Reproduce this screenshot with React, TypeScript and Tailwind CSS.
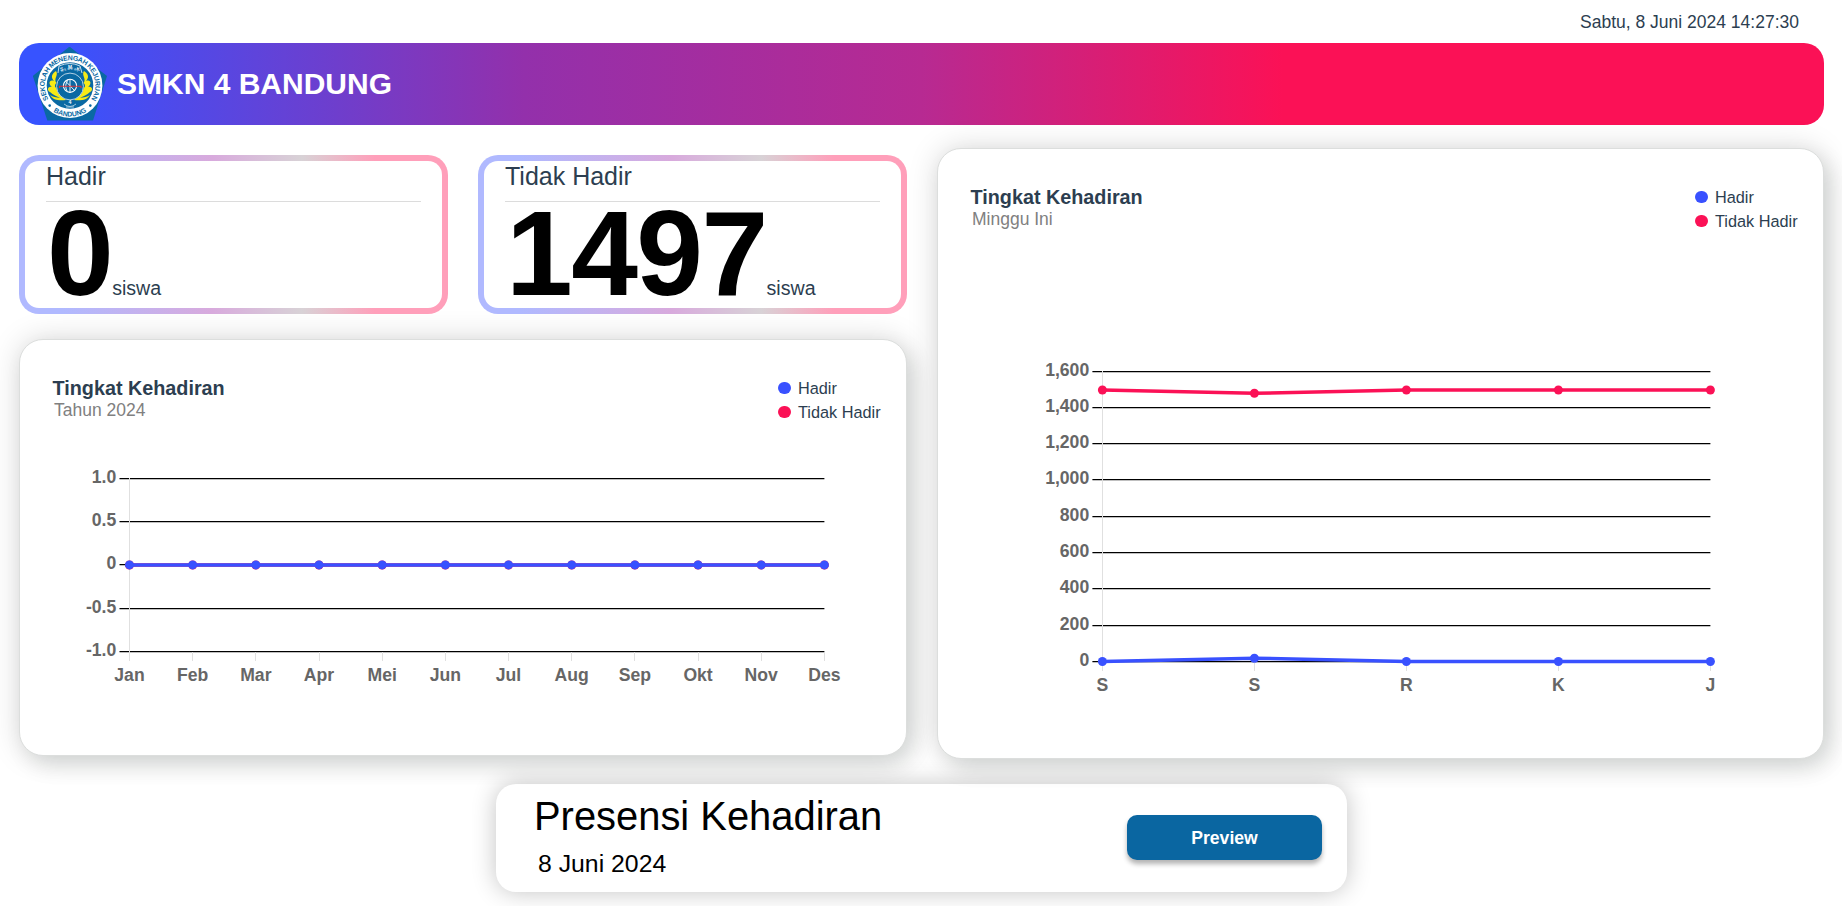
import React from "react";

const MONTHS = ["Jan", "Feb", "Mar", "Apr", "Mei", "Jun", "Jul", "Aug", "Sep", "Okt", "Nov", "Des"];
const DAYS = ["S", "S", "R", "K", "J"];

const BLUE = "#3951ff";
const RED = "#fb1156";

type Series = { color: string; ys: number[] };

type ChartProps = {
  className: string;
  viewBox: string;
  xStart: number;
  xEnd: number;
  labels: string[];
  rows: { label: string; y: number }[];
  series: Series[];
};

function LineChart({ className, viewBox, xStart, xEnd, labels, rows, series }: ChartProps) {
  const step = (xEnd - xStart) / (labels.length - 1);
  const xs = labels.map((_, i) => xStart + i * step);
  const bottom = rows[rows.length - 1].y;
  return (
    <svg className={className} viewBox={viewBox} fontFamily='"Liberation Sans", Arial, sans-serif' fontWeight="700" fontSize="17.6" fill="#666">
      {rows.map((r) => (
        <g key={r.label}>
          <rect x={xStart - 10} y={r.y} width={xEnd - xStart + 10} height="1.25" fill="#000" />
          <text x={xStart - 13.2} y={r.y + 5} textAnchor="end">{r.label}</text>
        </g>
      ))}
      <rect x={Math.floor(xStart)} y={rows[0].y} width="1" height={bottom - rows[0].y + 10} fill="#e0e0e0" />
      {xs.map((x, i) => (
        <g key={i}>
          <rect x={Math.floor(x)} y={bottom + 1} width="1" height="9" fill="#e0e0e0" />
          <text x={x} y={bottom + 30} textAnchor="middle">{labels[i]}</text>
        </g>
      ))}
      {series.map((s) => (
        <g key={s.color}>
          <polyline points={xs.map((x, i) => `${x},${s.ys[i]}`).join(" ")} fill="none" stroke={s.color} strokeWidth="3.5" />
          {xs.map((x, i) => (
            <circle key={i} cx={x} cy={s.ys[i]} r="4.5" fill={s.color} />
          ))}
        </g>
      ))}
    </svg>
  );
}

function Logo() {
  return (
    <svg className="h-[74px] w-[74px] shrink-0" viewBox="33 48 74 74" fontFamily='"Liberation Sans", Arial, sans-serif' fontWeight="700">
      <defs>
        <path id="ringTop" d="M 49.3 101 A 25.3 25.3 0 1 1 90.7 101" />
        <path id="ringBottom" d="M 41.6 99 A 31 31 0 0 0 98.4 99" />
        <path id="innerTop" d="M 55 81 A 16.2 16.2 0 0 1 85 81" />
      </defs>
      <path d="M69.5 47.6 L107 77 L93 121.6 H47.3 L32.8 77 Z" fill="#0a69a3" />
      <circle cx="70" cy="86.5" r="32.4" fill="#fff" />
      <circle cx="70" cy="86.5" r="23.3" fill="#0a69a3" />
      <text fontSize="6.9" fill="#0a69a3" textAnchor="middle" letterSpacing="-0.35">
        <textPath href="#ringTop" startOffset="50%">SEKOLAH MENENGAH KEJURUAN</textPath>
      </text>
      <text fontSize="6.9" fill="#0a69a3" textAnchor="middle">
        <textPath href="#ringBottom" startOffset="50%">BANDUNG</textPath>
      </text>
      <circle cx="49.7" cy="106.6" r="1.3" fill="#0a69a3" />
      <circle cx="90.3" cy="106.6" r="1.3" fill="#0a69a3" />
      <path d="M59 67 L58 74 M59 67 Q70 62 80 67 L82 74" fill="none" stroke="#d8e8f2" strokeWidth="0.9" />
      <g fill="#fff" fontSize="4.8" textAnchor="middle">
        <text x="62" y="71.6" transform="rotate(-12 62 71.6)">S</text>
        <text x="70" y="70">M</text>
        <text x="78" y="71.6" transform="rotate(12 78 71.6)">K</text>
      </g>
      <text fontSize="3.2" fill="#b9d8ea" textAnchor="middle" letterSpacing="0.9">
        <textPath href="#innerTop" startOffset="50%">NEGERI</textPath>
      </text>
      <path d="M56 72 C51 75 51 79 54 82 C49 80 48 85 52 88 C47 87 47 92 50 93 C53 96 57 97 60 99 C56 98 53 98 50 96 C53 101 59 102 66 101 C61 97 57 94 56.5 89 C54 88 55 85 56.5 84 C53 80 59 76 56 72 Z" fill="#f7ea16" />
      <path d="M84 72 C89 75 89 79 86 82 C91 80 92 85 88 88 C93 87 93 92 90 93 C87 96 83 97 80 99 C84 98 87 98 90 96 C87 101 81 102 74 101 C79 97 83 94 83.5 89 C86 88 85 85 83.5 84 C87 80 81 76 84 72 Z" fill="#f7ea16" />
      <circle cx="70" cy="87.5" r="13.4" fill="#0a69a3" stroke="#c5ddeb" strokeWidth="0.9" />
      <circle cx="70" cy="86.8" r="6.6" fill="none" stroke="#fff" strokeWidth="1.1" />
      <path d="M70 80 V93.5 M65.5 82 L74.5 91.5 M67 92 Q64 86 68 81" fill="none" stroke="#fff" strokeWidth="0.9" />
      <path d="M59.5 89 V87.2 H81 V89" fill="none" stroke="#d8343c" strokeWidth="1.1" />
      <text x="70" y="105" fontSize="5.2" fill="#fff" textAnchor="middle">4</text>
      <path d="M64 105 Q70 110 76 105 M66 108 H74" fill="none" stroke="#c5ddeb" strokeWidth="0.8" />
    </svg>
  );
}

function StatCard({ title, value }: { title: string; value: string }) {
  return (
    <div className="h-[159px] w-[429px] rounded-[20px] bg-[linear-gradient(90deg,#b0b9ff_0%,#b0b9ff_10%,#d8aadd_45%,#d8d2d6_66%,#ff9fba_83%)] p-[6px]">
      <div className="flex h-full flex-col rounded-[14px] bg-white px-[21px] pt-[3px]">
        <div className="h-[38px] shrink-0 border-b border-[#dcdcdc] text-[25px] leading-[24px] text-[#2c3e50]">{title}</div>
        <div className="flex items-baseline leading-[103px]">
          <span className="pl-[1px] text-[120px] font-bold tracking-[-1.6px] text-black">{value}</span>
          <span className="text-[19.6px] text-[#2c3e50]">siswa</span>
        </div>
      </div>
    </div>
  );
}

function ChartHeading({ subtitle }: { subtitle: string }) {
  return (
    <div className="flex h-[101px] justify-between pt-[38px] pl-[32.5px]">
      <div className="leading-none">
        <h2 className="text-[19.8px] leading-[20px] font-bold text-[#2c3e50]">Tingkat Kehadiran</h2>
        <p className="mt-[3px] pl-[1.5px] text-[17.5px] leading-[18px] text-[#808080]">{subtitle}</p>
      </div>
      <ul className="w-[128px] text-[16.3px] leading-[24px] text-[#2c3e50]">
        <li className="-mt-[2px] flex items-center gap-[7.5px]">
          <span className="h-[12.5px] w-[12.5px] rounded-full bg-[#3951ff]" />
          Hadir
        </li>
        <li className="flex items-center gap-[7.5px]">
          <span className="h-[12.5px] w-[12.5px] rounded-full bg-[#fb1156]" />
          Tidak Hadir
        </li>
      </ul>
    </div>
  );
}

const YEAR_ROWS = [
  { label: "1.0", y: 478 },
  { label: "0.5", y: 521 },
  { label: "0", y: 564 },
  { label: "-0.5", y: 608 },
  { label: "-1.0", y: 651 },
];

const WEEK_ROWS = [
  { label: "1,600", y: 371 },
  { label: "1,400", y: 407 },
  { label: "1,200", y: 443 },
  { label: "1,000", y: 479 },
  { label: "800", y: 516 },
  { label: "600", y: 552 },
  { label: "400", y: 588 },
  { label: "200", y: 625 },
  { label: "0", y: 661 },
];

export default function App() {
  return (
    <div className="flex h-[906px] w-full flex-col overflow-hidden bg-white px-[19px] font-['Liberation_Sans',Arial,sans-serif]">
      <div className="flex h-[43px] shrink-0 justify-end pt-[13px] pr-[24px] text-[17.5px] leading-[18px] text-[#2c3e50]">
        Sabtu, 8 Juni 2024 14:27:30
      </div>

      <header className="flex h-[82px] w-[1805px] shrink-0 items-center rounded-[20px] bg-[linear-gradient(90deg,#3753ff_2%,#9330ab_28%,#b72a92_50%,#fb1156_70%)] pl-[14px]">
        <Logo />
        <h1 className="ml-[10px] text-[30px] leading-[34px] font-bold text-white">SMKN 4 BANDUNG</h1>
      </header>

      <main className="relative z-10 flex shrink-0 gap-[30px]">
        <div className="w-[888px] shrink-0 pt-[30px]">
          <div className="flex gap-[30px]">
            <StatCard title="Hadir" value="0" />
            <StatCard title="Tidak Hadir" value="1497" />
          </div>
          <section className="mt-[25px] h-[417px] w-[888px] rounded-[24px] border border-[#dcdedd] bg-white shadow-[8px_10px_22px_rgba(0,25,15,0.11),0_0_30px_rgba(0,0,0,0.15)]">
            <ChartHeading subtitle="Tahun 2024" />
            <LineChart
              className="h-[300px] w-[886px]"
              viewBox="20 441 886 300"
              xStart={129.5}
              xEnd={824.4}
              labels={MONTHS}
              rows={YEAR_ROWS}
              series={[
                { color: RED, ys: MONTHS.map(() => 565) },
                { color: BLUE, ys: MONTHS.map(() => 564.9) },
              ]}
            />
          </section>
        </div>
        <section className="mt-[23px] h-[611px] w-[887px] shrink-0 rounded-[24px] border border-[#dcdedd] bg-white shadow-[8px_10px_22px_rgba(0,25,15,0.11),0_0_30px_rgba(0,0,0,0.15)]">
          <ChartHeading subtitle="Minggu Ini" />
          <LineChart
            className="h-[480px] w-[885px]"
            viewBox="938 250 885 480"
            xStart={1102.4}
            xEnd={1710.4}
            labels={DAYS}
            rows={WEEK_ROWS}
            series={[
              { color: RED, ys: [390, 393.3, 390, 390, 390] },
              { color: BLUE, ys: [661.5, 658.2, 661.5, 661.5, 661.5] },
            ]}
          />
        </section>
      </main>

      <section className="mt-[25px] ml-[477px] flex h-[108px] w-[851px] shrink-0 items-start justify-between rounded-[20px] bg-white pr-[25px] pl-[38px] shadow-[0_0_24px_rgba(0,0,0,0.24)]">
        <div className="pt-[10px]">
          <h2 className="text-[39.9px] leading-[44px] text-black">Presensi Kehadiran</h2>
          <p className="mt-[13px] pl-[4px] text-[24.8px] leading-[26px] text-black">8 Juni 2024</p>
        </div>
        <button className="mt-[31px] h-[45px] w-[195px] rounded-[10px] bg-[#0a66a1] pt-[2px] text-[17.6px] font-bold text-white shadow-[0_4px_5px_rgba(0,0,0,0.3)]">
          Preview
        </button>
      </section>
    </div>
  );
}
